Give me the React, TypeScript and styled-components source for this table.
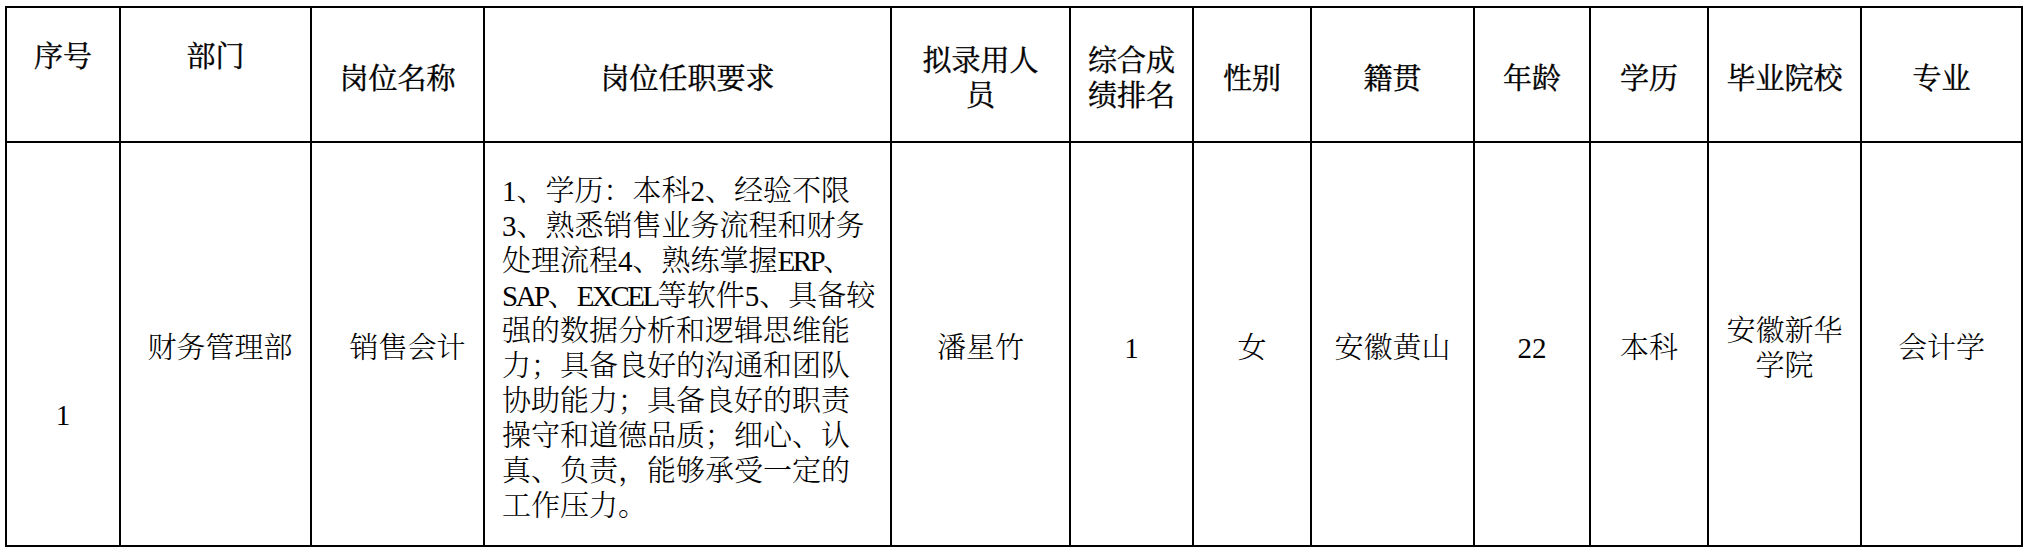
import React from 'react';
import styled, { createGlobalStyle } from 'styled-components';

const GlobalStyle = createGlobalStyle`
  html, body {
    margin: 0;
    padding: 0;
    background: #fff;
  }
  body {
    font-family: "Liberation Serif", "Noto Serif CJK SC", "Noto Sans CJK SC", serif;
    color: #000;
  }
`;

interface Column {
  title: string[];
  width: number;
  raised?: boolean;
}

const columns: Column[] = [
  { title: ['序号'], width: 114, raised: true },
  { title: ['部门'], width: 191, raised: true },
  { title: ['岗位名称'], width: 173 },
  { title: ['岗位任职要求'], width: 407 },
  { title: ['拟录用人', '员'], width: 179 },
  { title: ['综合成', '绩排名'], width: 123 },
  { title: ['性别'], width: 118 },
  { title: ['籍贯'], width: 163 },
  { title: ['年龄'], width: 116 },
  { title: ['学历'], width: 118 },
  { title: ['毕业院校'], width: 153 },
  { title: ['专业'], width: 161 },
];

const App = () => {
  return (
    <Page>
      <GlobalStyle />
      <Table>
        <colgroup>
          {columns.map((c, i) => (
            <Col key={i} $w={c.width} />
          ))}
        </colgroup>
        <thead>
          <HeadRow>
            {columns.map((c, i) => (
              <HeadCell key={i} $raised={c.raised}>
                {c.title.map((t, j) => (
                  <Line key={j}>{t}</Line>
                ))}
              </HeadCell>
            ))}
          </HeadRow>
        </thead>
        <tbody>
          <BodyRow>
            <Cell $padTop={143}>1</Cell>
            <Cell $padLeft={11}>财务管理部</Cell>
            <Cell $padLeft={22}>销售会计</Cell>
            <DescCell>
              <Line>1、学历：本科2、经验不限</Line>
              <Line>3、熟悉销售业务流程和财务</Line>
              <Line>
                处理流程4、熟练掌握<Latin>ERP</Latin>、
              </Line>
              <Line>
                <Latin>SAP</Latin>、<Latin>EXCEL</Latin>等软件5、具备较
              </Line>
              <Line>强的数据分析和逻辑思维能</Line>
              <Line>力；具备良好的沟通和团队</Line>
              <Line>协助能力；具备良好的职责</Line>
              <Line>操守和道德品质；细心、认</Line>
              <Line>真、负责，能够承受一定的</Line>
              <Line>工作压力。</Line>
            </DescCell>
            <Cell>潘星竹</Cell>
            <Cell>1</Cell>
            <Cell>女</Cell>
            <Cell>安徽黄山</Cell>
            <Cell>22</Cell>
            <Cell>本科</Cell>
            <Cell>
              <Line>安徽新华</Line>
              <Line>学院</Line>
            </Cell>
            <Cell>会计学</Cell>
          </BodyRow>
        </tbody>
      </Table>
    </Page>
  );
};

export default App;

const Page = styled.div`
  width: 2026px;
  height: 550px;
  padding: 6px 0 0 5px;
  box-sizing: border-box;
  overflow: hidden;
`;

const Table = styled.table`
  border-collapse: collapse;
  table-layout: fixed;
  width: 2016px;
  font-size: 29px;
  line-height: 35px;
`;

const Col = styled.col<{ $w: number }>`
  width: ${(p) => p.$w}px;
`;

const HeadRow = styled.tr`
  height: 135px;
`;

const BodyRow = styled.tr`
  height: 404px;
`;

const HeadCell = styled.th<{ $raised?: boolean }>`
  border: 2px solid #000;
  padding: ${(p) => (p.$raised ? '0 2px 35px' : '9px 2px 0')};
  font-weight: 400;
  text-align: center;
  vertical-align: middle;
  white-space: nowrap;
  -webkit-text-stroke: 0.4px #000;
`;

const Cell = styled.td<{ $padTop?: number; $padLeft?: number }>`
  border: 2px solid #000;
  padding: ${(p) => p.$padTop ?? 9}px 2px 0 ${(p) => p.$padLeft ?? 2}px;
  text-align: center;
  vertical-align: middle;
  white-space: nowrap;
  font-weight: 300;
`;

const DescCell = styled(Cell)`
  text-align: left;
  padding-left: 17px;
`;

const Line = styled.span`
  display: block;
  white-space: nowrap;
`;

const Latin = styled.span`
  letter-spacing: -2.5px;
`;
